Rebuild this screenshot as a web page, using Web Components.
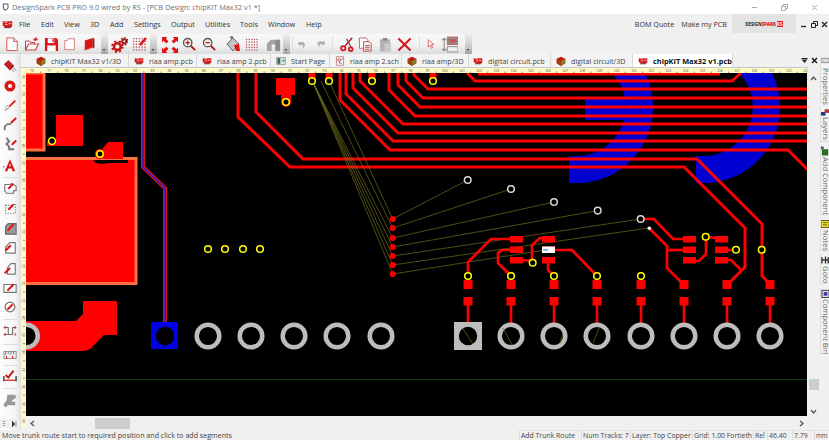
<!doctype html>
<html><head><meta charset="utf-8"><style>html,body{margin:0;height:100%;overflow:hidden;background:#f0f0f0}</style></head>
<body>
<ds-app>
  <ds-titlebar>DesignSpark PCB PRO 9.0 wired by RS - [PCB Design: chipKIT Max32 v1 *]</ds-titlebar>
  <ds-menubar></ds-menubar>
  <ds-toolbar></ds-toolbar>
  <ds-body>
    <ds-lefttools slot="left"></ds-lefttools>
    <ds-tabs slot="tabs">
      <ds-tab w="108" pad="15" icon="cube">chipKIT Max32 v1/3D</ds-tab>
      <ds-tab w="68" pad="5" icon="pcb">riaa amp.pcb</ds-tab>
      <ds-tab w="74" pad="5" icon="pcb">riaa amp 2.pcb</ds-tab>
      <ds-tab w="59" pad="5" icon="start">Start Page</ds-tab>
      <ds-tab w="72" pad="5" icon="sch">riaa amp 2.sch</ds-tab>
      <ds-tab w="67" pad="5" icon="cube">riaa amp/3D</ds-tab>
      <ds-tab w="82" pad="4" icon="pcb">digital circuit.pcb</ds-tab>
      <ds-tab w="82" pad="5" icon="cube">digital circuit/3D</ds-tab>
      <ds-tab w="100" pad="5" icon="pcb" active>chipKIT Max32 v1.pcb</ds-tab>
    </ds-tabs>
    <ds-ruler slot="rtop" dir="h"></ds-ruler>
    <ds-ruler slot="rleft" dir="v"></ds-ruler>
    <ds-board slot="board"></ds-board>
    <ds-scrollbar slot="vscroll" dir="v"></ds-scrollbar>
    <ds-scrollbar slot="hscroll" dir="h"></ds-scrollbar>
    <ds-sidetabs slot="side">
      <ds-sidetab h="48" ih="13" icon="sprop">Properties</ds-sidetab>
      <ds-sidetab h="35" ih="10" icon="slay">Layers</ds-sidetab>
      <ds-sidetab h="69" ih="11" icon="sadd">Add Component</ds-sidetab>
      <ds-sidetab h="32" ih="11" icon="snote">Notes</ds-sidetab>
      <ds-sidetab h="29" ih="11" icon="sgoto">Goto</ds-sidetab>
      <ds-sidetab h="66" ih="11" icon="sbin">Component Bin</ds-sidetab>
    </ds-sidetabs>
  </ds-body>
  <ds-statusbar></ds-statusbar>
</ds-app>
<script>
const FONT='"Open Sans","Noto Sans","Liberation Sans",sans-serif';
const R='#e01010',G='#6e6e6e';
const dots=(x0,y0,n,m,s,c)=>{let o='';for(let i=0;i<n;i++)for(let j=0;j<m;j++)o+=`<rect x="${x0+i*s}" y="${y0+j*s}" width="1.3" height="1.3" fill="${c}"/>`;return o};
const pencil=(x,y,l=7)=>`<path d="M${x} ${y}l${l} -${l}" stroke="${R}" stroke-width="2.4" fill="none"/>`;
const ICONS={
 page:`<path d="M2 1h8l4 4v10.500H2z" fill="#fff" stroke="#d84040"/><path d="M10 1v4h4" fill="#eee" stroke="#d84040"/>`,
 open:`<path d="M1.500 13V5h4l1 1.500h4V9" fill="#fff" stroke="#c84040"/><path d="M1.500 14l3-6h10l-3 6z" fill="#fff" stroke="#c84040" stroke-width="1.200"/><path d="M9 4c1-2 3-3 4-2l1 2-3 1" fill="#e03030"/>`,
 save:`<path d="M1 1h12l2 2v12H1z" fill="#d81818"/><rect x="4" y="1.500" width="7" height="5" fill="#fff"/><rect x="3.500" y="9" width="9" height="6" fill="#fff"/><rect x="9" y="2" width="1.500" height="3.500" fill="#d81818"/>`,
 folder:`<path d="M2 4h3l1-2h7v12.500H2z" fill="#fff" stroke="#d07070"/>`,
 book:`<path d="M2 4l9-3v11l-9 3.500z" fill="#d81818"/><path d="M11 1l2 1v10l-2 1z" fill="#901010"/><path d="M2 15.500l9-3" stroke="#f5a0a0" stroke-width=".8"/>`,
 gear:`<circle cx="6" cy="10" r="3.200" fill="none" stroke="#c81818" stroke-width="2.400"/><circle cx="6" cy="10" r="5" fill="none" stroke="#c81818" stroke-width="1.800" stroke-dasharray="2 2"/><circle cx="12.500" cy="5" r="1.900" fill="none" stroke="#a01818" stroke-width="1.800"/><circle cx="12.500" cy="5" r="3.300" fill="none" stroke="#a01818" stroke-width="1.400" stroke-dasharray="1.500 1.500"/>`,
 gridedit:dots(1,2,5,5,2.800,'#c05050')+`<path d="M8 9l6-7" stroke="${R}" stroke-width="2.400"/>`,
 fit:`<path d="M1 1h5l-1.500 1.500 2.500 2.500-2 2-2.500-2.500L1 6zM16 1v5l-1.500-1.500L12 7l-2-2 2.500-2.500L11 1zM1 16v-5l1.500 1.500L5 10l2 2-2.500 2.500L6 16zM16 16h-5l1.500-1.500L10 12l2-2 2.500 2.500L16 11z" fill="${R}"/>`,
 zin:`<circle cx="6.500" cy="6.500" r="4.800" fill="#eee" stroke="#555" stroke-width="1.500"/><path d="M4 6.500h5M6.500 4v5" stroke="${R}" stroke-width="1.400"/><path d="M10 10l5 5" stroke="#b02020" stroke-width="2.200"/>`,
 zout:`<circle cx="6.500" cy="6.500" r="4.800" fill="#eee" stroke="#555" stroke-width="1.500"/><path d="M4 6.500h5" stroke="${R}" stroke-width="1.400"/><path d="M10 10l5 5" stroke="#b02020" stroke-width="2.200"/>`,
 bucket:`<path d="M2 8l6-6 6 6-6 7z" fill="#c4c4c4" stroke="#666"/><path d="M6 3V1h2" stroke="#666" fill="none" stroke-width="1.300"/><path d="M9 9l5-1 1 7h-4z" fill="${R}"/>`,
 grid:dots(1,2,5,5,2.800,'#b84848'),
 gshape:`<path d="M1 7l4-4h10v12h-5V8H6v7H1z" fill="#a4a4a4"/><path d="M10 3h5v12h-5z" fill="#8c8c8c"/>`,
 undo:`<path d="M3 5c5-2 10 0 8 6l-3 3c2-4 1-6-3-6l1 3-5-4 3-4z" fill="#a8a8a8"/>`,
 redo:`<path d="M11 5c-5-2-9 0-7 5l3 3c-2-3-1-5 3-5l-1 3 5-4-3-4z" fill="#b0b0b0"/>`,
 scis:`<path d="M14 1L6 10M8 2l5 9" stroke="#555" stroke-width="1.300"/><path d="M14 1L7 9" stroke="${R}" stroke-width="1.300"/><circle cx="4.500" cy="12" r="2.300" fill="none" stroke="${R}" stroke-width="1.800"/><circle cx="12.500" cy="13" r="2" fill="none" stroke="${R}" stroke-width="1.800"/>`,
 copy:`<path d="M1.500 1h7l2 2v9h-9z" fill="#fff" stroke="#c86060"/><path d="M6 5h6l2 2v8H6z" fill="#fff" stroke="#b04040"/><path d="M7.500 9h5M7.500 11h5M7.500 13h5" stroke="#b04040"/>`,
 paste:`<path d="M2 2.500h11v13H2z" fill="#b4b4b4"/><path d="M5 1h5v3H5z" fill="#8a8a8a"/><path d="M7 7h7v8H7z" fill="#cacaca"/>`,
 x:`<path d="M1.500 1.500l13 13M14.500 1.500l-13 13" stroke="#d81818" stroke-width="2.200"/>`,
 cursor:`<path d="M2 1l9 8H7l2 5-2 1-2-5-3 3z" fill="#fff" stroke="#d84040" stroke-width="1.200"/>`,
 swap:`<path d="M3 2v12M3 2L1 4M3 2l2 2M3 14l-2-2M3 14l2-2" stroke="#888" fill="none"/><rect x="6" y="1" width="10" height="7" fill="#8a8a8a" stroke="#c66"/><rect x="8" y="3" width="6" height="3" fill="#d05050"/><rect x="6" y="10" width="10" height="5" fill="#eee" stroke="#999"/>`,
 chip:`<path d="M1 6l5-5 7 7-5 5z" fill="#b81818"/><path d="M3 5l3-3M5 7l3-3M7 9l3-3" stroke="#e86060" stroke-width=".8"/><path d="M10 12l3 3M12 10l3 3" stroke="#999" stroke-width="1.200"/>`,
 via:`<circle cx="8" cy="8" r="4.300" fill="#fff" stroke="#d81818" stroke-width="4"/>`,
 line:`<path d="M2 14l5-3" stroke="#888" stroke-width="1.200"/><path d="M7 10l7-7" stroke="${R}" stroke-width="2"/><path d="M2 11l4-3" stroke="#999"/>`,
 trace:`<path d="M2 15v-4l3-3h4" stroke="#777" stroke-width="2" fill="none"/>`+pencil(9,7,6),
 trunk:`<path d="M4 1l3 4-3 3 3 3v3h6" stroke="#777" stroke-width="2.200" fill="none"/>`+pencil(10,9,5),
 A:`<path d="M8 1.500L14 15h-3l-1-3H6l-1 3H2zM7 9.500h2L8 6z" fill="#d81818" fill-rule="evenodd"/><circle cx="1" cy="10" r=".8" fill="#d81818"/>`,
 shape1:`<path d="M2 4h6l2-1 5 3v5h-3v3H4l-2-3z" fill="#fff" stroke="#777" stroke-width="1.300"/>`+pencil(6,9,6),
 shape2:`<path d="M3 5h8l3-2v11H3z" fill="#fff" stroke="#777" stroke-dasharray="1.500 1.500" stroke-width="1.300"/>`+pencil(6,10,6),
 shape3:`<path d="M3 6l3-3h9v12H3z" fill="#999" stroke="#666" stroke-width="1.300"/>`+pencil(5,11,7),
 shape4:`<path d="M3 15V8l5-5h6v12z" fill="#fff" stroke="#777" stroke-width="1.300"/>`+pencil(3,12,6),
 shape5:`<path d="M5 15V8l4-5h5v12z" fill="#fff" stroke="#777" stroke-width="1.300"/>`+pencil(2,14,6),
 rect:`<path d="M1 4h14v9H1z" fill="#fff" stroke="#777" stroke-width="1.300"/>`+pencil(5,11,7),
 circ:`<circle cx="8" cy="8" r="5.500" fill="#fff" stroke="#777" stroke-width="1.500"/>`+pencil(5,11,6),
 route:`<path d="M1 4h5v8h5V4h4M1 12h4" stroke="#666" fill="none" stroke-width="1.200"/><path d="M1 4l2-1.500M1 4l2 1.500M15 12l-2-1.500M15 12l-2 1.500M1 12l2-1.500M1 12l2 1.500M15 4l-2-1.500M15 4l-2 1.500" stroke="${R}"/>`,
 meas:`<rect x="1" y="4" width="14" height="8" fill="#eee" stroke="#888"/><path d="M3 4v4M6 4v3M9 4v4M12 4v3" stroke="#777"/><path d="M4 9v3M11 9v3" stroke="${R}" stroke-width="1.200"/>`,
 check:`<path d="M3 8l3 3 6-8" stroke="#c81818" stroke-width="2.200" fill="none"/><path d="M1 14h14" stroke="#c81818" stroke-width="1.300"/><path d="M1 9v6M15 9v6" stroke="#555" stroke-width="1.800"/>`,
 blob:`<path d="M5 2h9l1 3-4 3-1 2h4v4H5l-1 2-3-1v-3l3-3z" fill="#999"/>`,
 cube:`<path d="M7 1l6 3v6l-6 4-6-4V4z" fill="#c01818"/><path d="M7 7l6-3v6l-6 4z" fill="#8a7a20"/><path d="M7 7L1 4v6l6 4z" fill="#a04010"/>`,
 pcb:`<path d="M1 3h12v6l-2 2H4L1 8z" fill="#d81818"/><path d="M3 4h4M8 6h4M4 7h3" stroke="#fff" stroke-width=".9"/><path d="M3 11h8" stroke="#333" stroke-width="1"/>`,
 start:`<rect x="1" y="2" width="12" height="10" fill="#dfe6df" stroke="#889"/><rect x="2" y="3" width="4" height="8" fill="#3a6a5a"/><rect x="9" y="5" width="3" height="3" fill="#5a8"/>`,
 sch:`<path d="M2 1h10v12H2z" fill="#fff" stroke="#b06060"/><path d="M4 4h4v3H4zM6 7v3h4" stroke="#b03030" fill="none"/><path d="M9 3h2M9 5h2" stroke="#777"/>`,
 sprop:`<rect x="1" y="3" width="8" height="5" fill="#ddd" stroke="#777" stroke-width=".8"/>`,
 slay:`<rect x="0" y="5" width="5" height="4" fill="#223a90"/><rect x="4" y="2" width="5" height="4" fill="#c03030"/>`,
 sadd:`<rect x="1" y="3" width="7" height="7" fill="#287028"/><rect x="0" y="0" width="3" height="3" fill="#555"/>`,
 snote:`<rect x="0" y="1" width="9" height="8" fill="#f4e820" stroke="#222" stroke-width=".8"/><path d="M2 3.500h5M2 6h5" stroke="#222" stroke-width=".8"/>`,
 sgoto:`<path d="M1 2v7M5 1v8M8 2v7M1 5h7" stroke="#333" stroke-width="1.500"/>`,
 sbin:`<rect x="1" y="2" width="8" height="8" fill="#ddd" stroke="#333"/><rect x="3" y="4" width="4" height="4" fill="#3838b0"/>`
};
const svg=(n,w,h,vb=16)=>`<svg xmlns="http://www.w3.org/2000/svg" width="${w}" height="${h}" viewBox="0 0 ${vb} ${vb}" style="display:block" preserveAspectRatio="xMidYMid meet">${ICONS[n]}</svg>`;
class Base extends HTMLElement{
  constructor(){super();this.attachShadow({mode:'open'});}
  html(s){this.shadowRoot.innerHTML=s;}
}
customElements.define('ds-app',class extends Base{connectedCallback(){this.html(`<style>:host{display:flex;flex-direction:column;width:829px;height:440px;overflow:hidden;background:#f0f0f0;font-family:${FONT};}</style><slot></slot>`)}});
customElements.define('ds-titlebar',class extends Base{connectedCallback(){this.html(`<style>:host{display:flex;align-items:center;height:14px;background:#fff;color:#707070;font-size:7.35px;flex:none}
.ic{width:7px;height:8px;margin:0 3px 0 2px}.t{flex:1;white-space:nowrap}
.b{display:flex;width:90px;color:#aaa}.b span{flex:1;text-align:center;display:flex;justify-content:center}</style>
<div class="ic"><svg width="8" height="8" viewBox="0 0 8 8"><path d="M1 1h5v4L4 7H2z" fill="#fff" stroke="#555"/></svg></div><div class="t"><slot></slot></div>
<div class="b"><span><svg width="7" height="7"><path d="M1 3.500h5" stroke="#aaa"/></svg></span><span><svg width="7" height="7"><path d="M.5 2.500h4v4h-4zM2 2.500v-2h4.500v4h-2" fill="none" stroke="#aaa"/></svg></span><span><svg width="7" height="7"><path d="M1 1l5 5M6 1L1 6" stroke="#aaa"/></svg></span></div>`)}});
customElements.define('ds-menubar',class extends Base{connectedCallback(){
 const items=[['File',19],['Edit',41],['View',64],['3D',90],['Add',110],['Settings',134],['Output',171],['Utilities',205],['Tools',240],['Window',268],['Help',306]];
 this.html(`<style>:host{display:flex;align-items:center;height:20px;background:#f0f0f0;color:#333;font-size:7.2px;flex:none;position:relative}
 .m{display:flex;gap:0;flex:1;height:100%;align-items:center}.m span{white-space:nowrap}
 .logo{width:64px;height:19px;background:#e3e3e3;display:flex;align-items:center;justify-content:center;font-size:4.400px;font-weight:700;color:#222;letter-spacing:0;margin:0 4px 1px 5px;white-space:nowrap}
 .logo b{color:#e01818}.logo i{font-style:normal;background:#e01818;color:#fff;padding:0 .5px;margin-left:.5px}
 .win{display:flex;width:29px;justify-content:space-between;color:#222;align-items:center;padding-right:1px;box-sizing:border-box}
 .r{margin-left:7px;white-space:nowrap}.ic{margin:0 6px 0 2px}</style>
 <div class="ic">${svg('pcb',11,11,14)}</div><div class="m" id="m"></div>
 <span class="r">BOM Quote</span><span class="r">Make my PCB</span>
 <div class="logo">DESIGN<b>SPARK</b><i>RS</i></div>
 <div class="win"><svg width="7" height="7"><path d="M1 5.500h5" stroke="#222" stroke-width="1.300"/></svg><svg width="7" height="7"><path d="M.5 2.500h4v4h-4zM2.500 2V.5h4v4H5" fill="none" stroke="#222"/></svg><svg width="7" height="7"><path d="M1 1l5 5M6 1L1 6" stroke="#222" stroke-width="1.300"/></svg></div>`);
 const m=this.shadowRoot.getElementById('m');
 items.forEach(([t,x],i)=>{const s=document.createElement('span');s.textContent=t;m.append(s);
   if(i<items.length-1)s.dataset.next=items[i+1][1];s.dataset.x=x;});
 [...m.children].forEach(s=>{if(s.dataset.next){s.style.width=(s.dataset.next-s.dataset.x)+'px';}});
}});
customElements.define('ds-toolbar',class extends Base{connectedCallback(){
 const L=[['page',5,14],['open',24,16],['save',44,15],['folder',63,14],['book',83,14],['#',101,7],['gear',111,17],['gridedit',132,16],['#',150,7],['fit',161,17],['zin',182,14],['zout',202,14],['bucket',225,16],['grid',245,15],['gshape',266,15],['#',283,7],['|',292,1],['undo',297,11],['redo',315,12],['|',332,1],['scis',339,15],['copy',358,15],['paste',378,15],['x',397,15],['|',419,1],['cursor',427,10],['swap',441,17],['#',465,7]];
 let o='',px=0;
 for(const [n,x,w] of L){const ml=x-px;px=x+w;
  if(n==='#')o+=`<div class="dd" style="margin-left:${ml}px;width:${w}px"><i></i></div>`;
  else if(n==='|')o+=`<div class="sep" style="margin-left:${ml}px"></div>`;
  else o+=`<div style="margin-left:${ml}px;width:${w}px">${svg(n,w,w)}</div>`;}
 this.html(`<style>:host{display:block;height:20px;background:#f0f0f0;flex:none}
 .bar{display:flex;align-items:center;width:472px;height:20px;background:linear-gradient(#f8f8f8,#f2f2f2 55%,#dcdcdc)}
 .sep{width:1px;height:16px;background:#ddd}
 .dd{height:20px;align-self:stretch;background:linear-gradient(#eee,#c4c4c4 70%,#a4a4a4);position:relative}
 .dd i{position:absolute;left:2px;bottom:3px;width:0;height:0;border:1.500px solid transparent;border-top:2.500px solid #222;border-bottom:0}</style><div class="bar">${o}</div>`)}});
customElements.define('ds-body',class extends Base{connectedCallback(){this.html(`<style>:host{display:flex;height:376px;flex:none}
 .c{display:grid;grid-template-columns:5px 781px 13px;grid-template-rows:13px 6px 343px 14px;width:799px}
 .t{grid-column:1/4}.rt{grid-column:1/4}.rl{grid-row:3/5}</style>
 <slot name="left"></slot>
 <div class="c"><div class="t"><slot name="tabs"></slot></div><div class="rt"><slot name="rtop"></slot></div>
 <div class="rl"><slot name="rleft"></slot></div><div><slot name="board"></slot></div><div style="grid-row:3/5;grid-column:3"><slot name="vscroll"></slot></div><div><slot name="hscroll"></slot></div></div>
 <slot name="side"></slot>`)}});
customElements.define('ds-lefttools',class extends Base{connectedCallback(){
 const L=[['chip',66],['via',86],['line',105],['trace',124],['trunk',144],['A',165],['|',177],['shape1',188],['shape2',208],['shape3',228],['shape4',247],['shape5',268],['rect',288],['circ',307],['|',319],['route',331],['|',344],['meas',355],['|',365],['check',375],['|',388],['blob',400]];
 let o='',py=54;
 for(const [n,y] of L){
  if(n==='|'){o+=`<div class="sep" style="margin-top:${y-py}px"></div>`;py=y+1;}
  else{o+=`<div style="margin-top:${y-7-py}px;height:14px;width:14px">${svg(n,14,14)}</div>`;py=y+7;}
 }
 this.html(`<style>:host{display:flex;flex-direction:column;width:21px;flex:none;background:linear-gradient(90deg,#fdfdfd,#f6f6f6 70%,#dedede);height:376px;align-items:center;padding-right:1px;box-sizing:border-box;position:relative}
 .sep{width:14px;height:1px;background:#ddd}
 .g{margin-top:auto;width:100%;height:9px;display:flex;justify-content:space-between;padding:0 3px;box-sizing:border-box;background:#efefef;align-items:center;margin-bottom:2px}
 .g svg{display:block}</style>${o}<div class="g"><svg width="3" height="6"><path d="M1 0v1M1 2v1M1 4v1" stroke="#444"/></svg><svg width="5" height="6"><path d="M0 0l3 3-3 3zM4 0v6" fill="#333" stroke="#333" stroke-width=".5"/></svg></div>`)}});
customElements.define('ds-tabs',class extends Base{connectedCallback(){this.html(`<style>:host{display:flex;height:13px;background:#f0f0f0;position:relative;align-items:stretch;border-top:0}
 .a{margin-left:auto;display:flex;gap:3px;align-items:center;padding-right:2px}.a svg{display:block}</style><slot></slot><div class="a"><svg width="7" height="7"><path d="M.5 1h6v1.500h-6zM1 3h5L3.500 6z" fill="#222"/></svg><svg width="7" height="7"><path d="M1 1l5 5M6 1L1 6" stroke="#111" stroke-width="1.400"/></svg></div>`)}});
customElements.define('ds-tab',class extends Base{connectedCallback(){
 const act=this.hasAttribute('active');
 this.html(`<style>:host{display:flex;align-items:center;width:${this.getAttribute('w')}px;box-sizing:border-box;padding-left:${this.getAttribute('pad')}px;gap:5px;font-size:${act?7.4:7.2}px;color:${act?'#111':'#444'};font-weight:${act?700:400};background:${act?'#fff':'#f3f3f3'};border-right:1px solid #d8d8d8;white-space:nowrap;flex:none;overflow:hidden}</style><div style="width:10px">${svg(this.getAttribute('icon'),10,10,14)}</div><slot></slot>`)}});
customElements.define('ds-ruler',class extends Base{connectedCallback(){
 const h=this.getAttribute('dir')==='h';let o='';
 if(h){for(let i=0;i<91;i++){const x=11+i*8.6,maj=i%2==0;o+=maj?`<text x="${x}" y="4.400" font-size="3.400" text-anchor="middle" fill="#665">${76+i/2}</text>`:`<path d="M${x} 3.500v2" stroke="#665" stroke-width=".7"/>`;}
  this.html(`<style>:host{display:block;height:6px}svg{display:block;background:#fdf9c4;border-top:1px solid #c8c8c8;box-sizing:border-box}text{font-family:"Liberation Sans",sans-serif}</style><svg width="787" height="6">${o}</svg>`);
 }else{for(let i=0;i<41;i++){const y=4+i*8.6,maj=i%2==0;o+=maj?`<text x="0" y="0" transform="translate(3.800 ${y}) rotate(-90)" font-size="3.200" text-anchor="middle" fill="#665">${64-i/2}</text>`:`<path d="M2 ${y}h2" stroke="#665" stroke-width=".7"/>`;}
  this.html(`<style>:host{display:block;height:357px}svg{display:block;background:#fdf9c4}text{font-family:"Liberation Sans",sans-serif}</style><svg width="5" height="355">${o}</svg>`);}
}});
customElements.define('ds-board',class extends Base{connectedCallback(){
 const poly=(p,w=3,c='#ff0000')=>`<polyline points="${p}" fill="none" stroke="${c}" stroke-width="${w}" stroke-linejoin="miter"/>`;
 const rect=(x,y,w,h,c='#ff0000')=>`<rect x="${x}" y="${y}" width="${w}" height="${h}" fill="${c}"/>`;
 const via=(x,y,c='#ffff00',r=3.3)=>`<circle cx="${x}" cy="${y}" r="${r}" fill="#000" stroke="${c}" stroke-width="1.500"/>`;
 const rat=(a,b,c,d)=>`<line x1="${a}" y1="${b}" x2="${c}" y2="${d}" stroke="#70701c" stroke-width=".7"/>`;
 const ring=x=>`<circle cx="${x}" cy="336" r="11.300" fill="#000" stroke="#bdbdbd" stroke-width="4.500"/>`;
 let s='';
 const arc=(cx,l)=>`<path d="M${l} 183L${cx} 183A76 76 0 0 0 ${cx+68} 73L${cx+35} 73A49 49 0 0 1 ${cx} 156L${l} 156Z" fill="#0000d0"/>`;
 s+=arc(577,569)+rect(585,97,40,23,'#0000d0');
 s+=arc(704,696);
 s+=`<path d="M26 73H44V150H26" fill="#f00" stroke="#ff7040" stroke-width="3"/><path d="M26 158.500H136V283.500H26" fill="#f00" stroke="#ff7040" stroke-width="3"/>`;
 s+=rect(56,115,27,31);
 s+=`<path d="M47 141H56V146H47z" fill="#f00"/><path d="M103 148l5-6h15v17H103z" fill="#f00"/><path d="M93 160H128V163H108L102 164 96 163z" fill="#000"/>`;
 s+=via(52,141,'#ffff00',3.4)+`<circle cx="100" cy="154" r="5.200" fill="#f00"/>`+via(100,154,'#ffff00',3.200);
 s+=poly('143,73 143,167 165,188 165,325',4,'#e01010')+poly('143,73 143,167 165,188 165,325',1.6,'#2020d0');
 s+=rect(151,322,27,27,'#0000e0')+`<circle cx="165" cy="336" r="9.200" fill="#000"/>`;
 s+=`<path d="M26 321H76L83 314V301H117V335H104L90 349Q87 351 82 351H26Z" fill="#f00"/>`;
 s+=`<circle cx="26.500" cy="336" r="11.300" fill="#000" stroke="#bdbdbd" stroke-width="4.500"/>`;
 const dy=[219,228,238,247,256,265,274];
 [['238,73 238,117 290,167 684,167 717,200 745,228 745,267 727,285'],['256,73 256,112 303,159 697,159 738,200 762,224 762,276 770,284'],
  ['340,73 340,100 390,150 788,150 809,171'],['346,73 346,94 393,141 807,141'],['353,73 353,88 398,133 807,133'],['360,73 360,81 403,124 807,124'],
  ['389,73 389,90 415,116 807,116'],['398,73 398,85 420,107 807,107'],['406,73 406,81 423,98 807,98'],['414,73 414,75 428,89 807,89'],
  ['467,73 475,81 732,81 741,73'],['478,74 720,74']].forEach(([p])=>s+=poly(p));
 [312,329,372,433].forEach(x=>s+=rect(x-3.500,73,7,8));
 s+=rect(276,78,19,17)+`<path d="M281 95h10v7a5 5 0 0 1-10 0z" fill="#f00"/>`;
 dy.forEach((y,i)=>{s+=rat(i<2?329-8*i:312,i<2?81:80,392.7,y)});
 s+=rat(392.7,219,467.7,180)+rat(392.7,228,511,189)+rat(392.7,238,554,202)+rat(392.7,247,597.7,210.6)+rat(392.7,256,640.7,219)+rat(392.7,265,649,228)+rat(392.7,274,545,250);
 ['468,276 468,262 491,239 512,239','511,276 498,263 498,253 502,250 512,250','522,260 532,261','532,260 532,245 540,238 545,238','548,262 548,270 554,276','553,250 572,250 597,276',
  '640,219 654,219 673,239 685,239','649,228 667,246 667,268 684,285','667,250 685,250','706,237 716,238','706,237 706,254 699,261 688,261','727,250 736,250','726,260 731,260 741,270'].forEach(p=>s+=poly(p,2.700));
 [510,542,683,715].forEach(x=>[236,246.500,257].forEach(y=>{s+=rect(x,y,13,6.500)}));
 s+=rect(542,246.500,13,6.500,'#fff')+rect(543,249,5,2,'#b0b0f0');
 [468,511,554,597,641,684,727,770].forEach(x=>{s+=rect(x-4.500,280,9,9)+rect(x-4.500,297,9,8.500)+rect(x-1.300,305,2.600,20)});
 [468,511,554,597,641].forEach(x=>s+=rect(x-1.300,276,2.600,5));
 [208,251,294,337,381,511,554,597,641,684,727,770].forEach(x=>s+=ring(x));
 s+=rect(454,322,28,28,'#bdbdbd')+`<circle cx="468" cy="336" r="9.200" fill="#000"/>`;
 s+=rat(463,329,473,344)+rat(503,328,512,345)+rat(563,333,560,343)+rat(599,328,593,343);
 [[312,81],[329,81],[372,81],[433,81],[286,102],[208,249],[225,249],[243,249],[260,249],[468,276],[511,276],[554,276],[597,276],[641,276],[532.700,262.700],[705.700,236.700],[736,249.700],[761.700,249.700]].forEach(([x,y])=>s+=via(x,y));
 [[467.700,180],[511,189],[554,202],[597.700,210.600],[640.700,219]].forEach(([x,y])=>s+=via(x,y,'#d8d8d8'));
 s+=`<circle cx="649.300" cy="228.300" r="1.800" fill="#fff"/>`;
 dy.forEach(y=>s+=`<circle cx="392.700" cy="${y}" r="3.100" fill="#f00000"/>`);
 s+=`<line x1="26" y1="379.500" x2="807" y2="379.500" stroke="#0c5010" stroke-width=".8"/>`;
 this.html(`<style>:host{display:block;width:781px;height:343px;background:#000;overflow:hidden}svg{display:block}</style><svg width="781" height="343" viewBox="26 73 781 343">${s}</svg>`);
}});
customElements.define('ds-scrollbar',class extends Base{connectedCallback(){
 const h=this.getAttribute('dir')==='h';
 const chev=p=>`<svg width="7" height="7"><path d="${p}" fill="none" stroke="#555" stroke-width="1.300"/></svg>`;
 if(h)this.html(`<style>:host{display:flex;height:14px;width:781px;background:#f0f0f0;align-items:center}.th{width:35px;height:11px;background:#cdcdcd;margin-left:59px}.e{margin-left:auto;margin-right:2px}svg{display:block}</style><div style="margin-left:3px">${chev('M5 1L2 3.500 5 6')}</div><div class="th"></div><div class="e">${chev('M2 1L5 3.500 2 6')}</div>`);
 else this.html(`<style>:host{display:flex;flex-direction:column;height:357px;width:13px;background:#f0f0f0;align-items:center}.th{width:10px;height:11px;background:#cdcdcd;margin-top:297px}.e{margin-top:auto;margin-bottom:15px}svg{display:block}</style><div style="margin-top:2px">${chev('M1 5L3.500 2 6 5')}</div><div class="th"></div><div class="e">${chev('M1 2L3.500 5 6 2')}</div>`);
}});
customElements.define('ds-sidetabs',class extends Base{connectedCallback(){this.html(`<style>:host{display:flex;flex-direction:column;width:9px;flex:none;gap:4px;padding-top:1px;overflow:hidden;background:#f0f0f0}</style><slot></slot>`)}});
customElements.define('ds-sidetab',class extends Base{connectedCallback(){this.html(`<style>:host{display:flex;flex-direction:column;align-items:center;height:${this.getAttribute('h')}px;box-sizing:border-box;border-bottom:1px solid #ddd;border-left:1px solid #ddd;color:#666;font-size:7.6px;white-space:nowrap;flex:none;background:#f2f2f2}.t{writing-mode:vertical-rl;line-height:9px}</style><div style="height:${this.getAttribute('ih')}px;width:9px;flex:none">${svg(this.getAttribute('icon'),9,10,10)}</div><div class="t"><slot></slot></div>`)}});
customElements.define('ds-statusbar',class extends Base{connectedCallback(){
 const c=[['Add Trunk Route',519,61],['Num Tracks: 7',581,48],['Layer: Top Copper',630,61],['Grid: 1.00 Fortieth',692,60],['Rel',753,13],['46.40',767,24],['7.79',792,22],['mm',814,15]];
 let px=240,o=`<div class="m" style="width:${px}px">Move trunk route start to required position and click to add segments</div>`;
 for(const [t,x,w] of c){o+=`<div class="p" style="margin-left:${x-px}px;width:${w}px${t==='mm'?';font-size:6.2px':''}">${t}</div>`;px=x+w;}
 this.html(`<style>:host{display:flex;height:10px;background:#f0f0f0;color:#444;font-size:6.9px;line-height:10px;flex:none;white-space:nowrap;overflow:hidden}
 .m{padding-left:2px;box-sizing:border-box;font-size:7.1px}.p{box-sizing:border-box;padding-left:1px;border-left:1px solid #ddd;border-top:1px solid #e2e2e2}</style>${o}`)}});
</script>
</body></html>
